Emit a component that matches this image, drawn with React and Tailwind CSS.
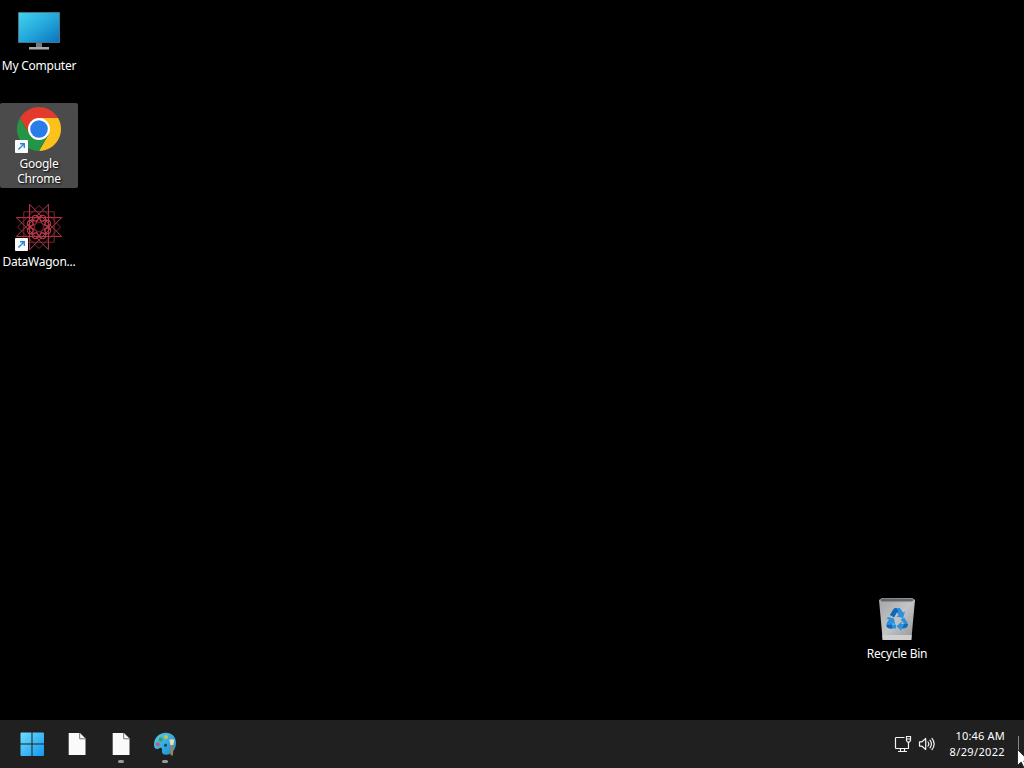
import React from 'react';

// Points of an n-pointed star, every `step`-th point joined
const starPath = (n, step, r, turn) => {
  const pt = (i) => {
    const a = ((i * 360) / n + turn) * (Math.PI / 180);
    return `${(24 + r * Math.cos(a)).toFixed(2)} ${(24 + r * Math.sin(a)).toFixed(2)}`;
  };
  return `M${Array.from({ length: n }, (_, i) => pt(i * step)).join('L')}Z`;
};

const MonitorIcon = () => (
  <svg viewBox="0 0 48 48" className="h-12 w-12">
    <defs>
      <linearGradient id="screen" x1="0" y1="0" x2="1" y2="1">
        <stop offset="0" stopColor="#41d3ea" />
        <stop offset="0.5" stopColor="#25a8dc" />
        <stop offset="1" stopColor="#0b74bf" />
      </linearGradient>
    </defs>
    <rect x="21" y="35" width="6" height="5.5" fill="#737b80" />
    <path d="M14 40h20v2.5H14z" fill="#a9acae" />
    <rect x="3" y="5" width="42" height="31" rx="0.8" fill="#477787" />
    <rect x="4" y="6" width="40" height="29" fill="url(#screen)" />
  </svg>
);

const ChromeIcon = () => (
  <svg viewBox="0 0 48 48" className="h-12 w-12">
    <path d="M4.95 13A22 22 0 0 1 43.05 13H24L14.47 29.5Z" fill="#e23b2e" />
    <path d="M43.05 13A22 22 0 0 1 24 46L33.53 29.5L24 13Z" fill="#fcc21b" />
    <path d="M4.95 13A22 22 0 0 0 24 46L33.53 29.5H14.47Z" fill="#249447" />
    <circle cx="24" cy="24" r="11" fill="#fff" />
    <circle cx="24" cy="24" r="8.8" fill="#2a7de9" />
  </svg>
);

const RosetteIcon = () => (
  <svg viewBox="0 0 48 48" className="h-12 w-12" fill="none" stroke="#c23a4c">
    <path d={starPath(8, 3, 24.5, 22.5)} strokeWidth="1" />
    {/* two crossed squares */}
    <path d={starPath(4, 1, 21.5, 0)} strokeWidth="0.8" stroke="#96303d" />
    <path d={starPath(4, 1, 21.5, 45)} strokeWidth="0.8" stroke="#96303d" />
    {[0, 45, 90, 135, 180, 225, 270, 315].map((a) => (
      <circle key={a} cx="33.5" cy="24" r="2.9" strokeWidth="1" transform={`rotate(${a + 22.5} 24 24)`} />
    ))}
    <path d={starPath(8, 3, 11, 0)} strokeWidth="0.8" />
    <circle cx="24" cy="24" r="4.4" fill="#000" stroke="#6b1d28" strokeWidth="0.8" />
  </svg>
);

const RecycleBinIcon = () => (
  <svg viewBox="0 0 48 48" className="h-12 w-12">
    <defs>
      <linearGradient id="bin" x1="0" y1="0" x2="1" y2="1">
        <stop offset="0" stopColor="#a3a5a7" />
        <stop offset="0.5" stopColor="#c3c4c6" />
        <stop offset="1" stopColor="#929496" />
      </linearGradient>
    </defs>
    <path d="M6 5L9 3H39L42 5L38.3 45H9.7Z" fill="url(#bin)" />
    <path d="M7 5L9.5 3.5H38.5L41 5L39 6.5H9Z" fill="#65686a" />
    <path d="M9.3 40H38.7L38.3 45H9.7Z" fill="#d0cfd0" />
    <g fill="#2b91df">
      <path d="M17 20L20.5 14.2Q21.5 13 23 13H27L30 17.5L32 16.5L30 23L23.5 21.5L25.7 20L23.8 17.5L21 22.3Z" />
      <path d="M31 22.5L34.5 27.5Q35.8 30 34 32Q33 33.5 31 33.5H28.5V36L23.5 31.2L28.5 26.8V29H31.2L27.7 24.5Z" />
      <path d="M15 22L21 23.5L22.2 29.5L20 28.3L19 29.5H23V33.5H17Q14.5 33.5 13.5 31.2Q12.7 29.5 14 27.5L16 24.5L13.6 23.5Z" />
    </g>
    <path d="M20.5 14.2Q21.5 13 23 13L25.5 16L23.8 17.5L21 22.3L17 20ZM14 30L19 29.5L19.5 33.5H17Q14.5 33.5 13.5 31.2ZM31.5 29H35L34 32L29 33.5Z" fill="#1268b2" />
  </svg>
);

const ShortcutArrow = () => (
  <svg viewBox="0 0 13 13" className="absolute bottom-0 left-0 h-[13px] w-[13px]">
    <rect width="13" height="13" rx="0.8" fill="#fafafa" />
    <path d="M3.4 9.6L9 4M5 3.7H9.3V8" fill="none" stroke="#2388cf" strokeWidth="1.35" />
  </svg>
);

const WindowsIcon = () => (
  <svg viewBox="0 0 24 24" className="h-6 w-6">
    <defs>
      <linearGradient id="win" gradientUnits="userSpaceOnUse" x1="0" y1="0" x2="24" y2="24">
        <stop offset="0" stopColor="#74dcfb" />
        <stop offset="1" stopColor="#0f9af0" />
      </linearGradient>
    </defs>
    <path d="M1.5 .5H11.5V11.5H.5V1.5Q.5 .5 1.5 .5ZM12.5 .5H23Q24 .5 24 1.5V11.5H12.5ZM.5 12.5H11.5V24H1.5Q.5 24 .5 23ZM12.5 12.5H24V23Q24 24 23 24H12.5Z" fill="url(#win)" />
  </svg>
);

const FileIcon = () => (
  <svg viewBox="0 0 24 24" className="h-6 w-6">
    <path d="M3.7 1H15L20.5 6.5V23H3.7Z" fill="#fafafa" />
    <path d="M14.7 .8V6.8H20.7" fill="none" stroke="#656565" strokeWidth="0.9" />
  </svg>
);

const PaintIcon = () => (
  <svg viewBox="0 0 24 24" className="h-6 w-6">
    <defs>
      <linearGradient id="palette" x1="0" y1="0" x2="1" y2="1">
        <stop offset="0" stopColor="#57cbed" />
        <stop offset="1" stopColor="#168bd1" />
      </linearGradient>
    </defs>
    <path d="M1 13C1 6 6 .8 13 .8C19 .8 23 5 23 11C23 16 20 22.8 13 22.8C9.8 22.8 8.5 21 9 18.5C9.4 16 8 15.2 6 16.4C3.5 18 1 16.5 1 13Z" fill="url(#palette)" />
    <circle cx="12.5" cy="13.3" r="1.5" fill="#17445f" />
    <circle cx="4.8" cy="12.2" r="2" fill="#b5646a" />
    <circle cx="7.7" cy="7.6" r="2.1" fill="#39a548" />
    <circle cx="13" cy="5" r="2.1" fill="#d8bc45" />
    <path d="M16.3 7.8Q18.8 6.8 21.4 7.8L20.2 13.5H17.5Z" fill="#ecdcae" />
    <path d="M17.5 13H20.2L20 23Q18.8 24 17.7 23Z" fill="#b07c48" />
  </svg>
);

const NetworkIcon = () => (
  <svg viewBox="0 0 18 18" className="h-[18px] w-[18px]" fill="none" stroke="#f2f2f2" strokeWidth="1.2">
    <path d="M10.5 2.5H2.2Q1.5 2.5 1.5 3.2V12.8Q1.5 13.5 2.2 13.5H14.5V8.5" />
    <path d="M6.5 13.5V16.5M10.5 13.5V16.5M4 16.5H13" />
    <path d="M12.5 1.5H16.5V5.5L15.5 7H13.5L12.5 5.5ZM12.5 4H16.5M14.5 7V9" />
  </svg>
);

const SpeakerIcon = () => (
  <svg viewBox="0 0 18 18" className="h-[18px] w-[18px]" fill="none" stroke="#f2f2f2" strokeWidth="1.2" strokeLinejoin="round" strokeLinecap="round">
    <path d="M1.5 6.8H4L7.7 3.5V14.5L4 11.2H1.5Z" />
    <path d="M10 7Q11.6 9 10 11M12 5.2Q14.8 9 12 12.8M14 3.4Q18.3 9 14 14.6" />
  </svg>
);

const desktopIcons = [
  { label: 'My Computer', icon: MonitorIcon, place: 'left-0 top-[5px]' },
  { label: 'Google Chrome', icon: ChromeIcon, place: 'left-0 top-[103px]', shortcut: true, selected: true },
  { label: 'DataWagon...', icon: RosetteIcon, place: 'left-0 top-[201px]', shortcut: true },
  { label: 'Recycle Bin', icon: RecycleBinIcon, place: 'left-[858px] top-[593px]' },
];

const taskbarItems = [
  { name: 'start', icon: WindowsIcon },
  { name: 'file', icon: FileIcon },
  { name: 'file-open', icon: FileIcon, running: true },
  { name: 'paint', icon: PaintIcon, running: true },
];

const App = () => {
  return (
    <div className="relative flex h-screen w-screen cursor-default select-none flex-col overflow-hidden bg-black text-white">
      {/* Desktop */}
      <div className="relative flex-1">
        {desktopIcons.map(({ label, icon: Icon, place, shortcut, selected }) => (
          <div
            key={label}
            className={`absolute flex h-[85px] w-[78px] flex-col items-center rounded-xs pt-0.5 ${place} ${
              selected ? 'bg-[#4b4b4b]' : ''
            }`}
          >
            <div className="relative h-12 w-12">
              <Icon />
              {shortcut && <ShortcutArrow />}
            </div>
            <div className="mt-[3px] text-center font-['Noto_Sans',sans-serif] text-[12px] leading-[15px] tracking-[-0.25px] [text-shadow:1px_1px_2px_#000]">
              {label}
            </div>
          </div>
        ))}
      </div>

      {/* Taskbar */}
      <div className="flex h-12 items-center justify-between bg-[#202020] pl-2.5">
        <div className="flex h-full">
          {taskbarItems.map(({ name, icon: Icon, running }) => (
            <div key={name} className="flex h-full w-11 flex-col items-center pt-3 first:mr-px">
              <Icon />
              {running && <div className="mt-1 h-[3px] w-1.5 rounded-full bg-[#9a9a9a]" />}
            </div>
          ))}
        </div>

        <div className="flex h-full items-center">
          <div className="flex gap-1.5">
            <NetworkIcon />
            <SpeakerIcon />
          </div>
          <div className="ml-3.5 text-right font-['Noto_Sans',sans-serif] text-[11px] leading-4 tracking-[0.35px]">
            <div className="tracking-[0.2px]">10:46 AM</div>
            <div>8/29/2022</div>
          </div>
          <div className="ml-[13px] mr-[5px] h-4 w-px bg-[#858585]" />
        </div>
      </div>

      {/* Mouse pointer */}
      <svg viewBox="0 0 12 19" className="absolute left-[1017px] top-[749px] h-[19px] w-3">
        <path d="M.5 .5V16.5L4.2 13L6.8 18.5L9.2 17.4L6.8 12H11.8Z" fill="#fff" stroke="#111" strokeWidth="0.8" />
      </svg>
    </div>
  );
};

export default App;
